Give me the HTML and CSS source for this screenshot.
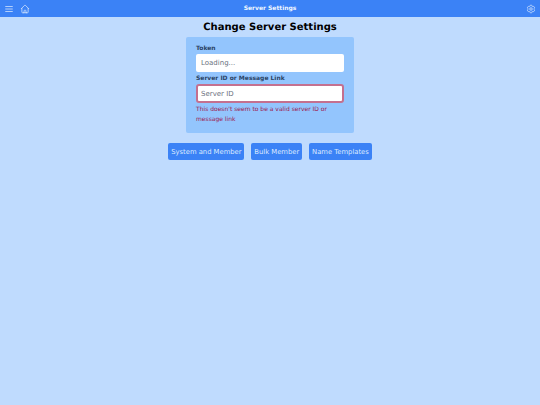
FILE: index.html
```html
<!DOCTYPE html>
<html lang="en">
<head>
    <meta charset="UTF-8">
    <meta name="viewport" content="width=device-width, initial-scale=1.0">
    <title>Server Settings</title>
    <link rel="stylesheet" href="styles.css">
</head>
<body>
    <nav class="navbar">
        <div class="nav-left">
            <svg class="icon" viewBox="0 0 24 24"><path d="M3 6h18M3 12h18M3 18h18"/></svg>
            <svg class="icon" viewBox="0 0 24 24"><path d="m2.25 12 8.954-8.955c.44-.439 1.152-.439 1.591 0L21.75 12M4.5 9.75v10.125c0 .621.504 1.125 1.125 1.125H9.75v-4.875c0-.621.504-1.125 1.125-1.125h2.25c.621 0 1.125.504 1.125 1.125V21h4.125c.621 0 1.125-.504 1.125-1.125V9.75M8.25 21h8.25"/></svg>
        </div>
        <span class="nav-title">Server Settings</span>
        <svg class="icon" viewBox="0 0 24 24"><path d="M9.594 3.94c.09-.542.56-.94 1.11-.94h2.593c.55 0 1.02.398 1.11.94l.213 1.281c.063.374.313.686.645.87.074.04.147.083.22.127.325.196.72.257 1.075.124l1.217-.456a1.125 1.125 0 0 1 1.37.49l1.296 2.247a1.125 1.125 0 0 1-.26 1.431l-1.003.827c-.293.241-.438.613-.43.992a7.723 7.723 0 0 1 0 .255c-.008.378.137.75.43.991l1.004.827c.424.35.534.955.26 1.43l-1.298 2.247a1.125 1.125 0 0 1-1.369.491l-1.217-.456c-.355-.133-.75-.072-1.076.124a6.47 6.47 0 0 1-.22.128c-.331.183-.581.495-.644.869l-.213 1.281c-.09.543-.56.94-1.11.94h-2.594c-.55 0-1.019-.398-1.11-.94l-.213-1.281c-.062-.374-.312-.686-.644-.87a6.52 6.52 0 0 1-.22-.127c-.325-.196-.72-.257-1.076-.124l-1.217.456a1.125 1.125 0 0 1-1.369-.49l-1.297-2.247a1.125 1.125 0 0 1 .26-1.431l1.004-.827c.292-.24.437-.613.43-.991a6.932 6.932 0 0 1 0-.255c.007-.38-.138-.751-.43-.992l-1.004-.827a1.125 1.125 0 0 1-.26-1.43l1.297-2.247a1.125 1.125 0 0 1 1.37-.491l1.216.456c.356.133.751.072 1.076-.124.072-.044.146-.086.22-.128.332-.183.582-.495.644-.869l.214-1.28Z"/><circle cx="12" cy="12" r="3"/></svg>
    </nav>

    <main class="content">
        <h1>Change Server Settings</h1>

        <form class="card">
            <label class="label" for="token">Token</label>
            <input class="input" id="token" type="text" placeholder="Loading...">

            <label class="label second" for="server">Server ID or Message Link</label>
            <input class="input invalid" id="server" type="text" placeholder="Server ID">
            <p class="error">This doesn't seem to be a valid server ID or message link</p>
        </form>

        <div class="buttons">
            <button class="button" type="button">System and Member</button>
            <button class="button" type="button">Bulk Member</button>
            <button class="button" type="button">Name Templates</button>
        </div>
    </main>
</body>
</html>
```

FILE: styles.css
```css
* {
    box-sizing: border-box;
}
body {
    margin: 0;
    min-height: 405px;
    background: #bfdbfe;
    font-family: "DejaVu Sans", sans-serif;
    text-rendering: geometricPrecision;
}
.navbar {
    display: flex;
    align-items: center;
    justify-content: space-between;
    height: 17px;
    padding: 0 4px 0 3.5px;
    background: #3b82f6;
    position: relative;
}
.nav-left {
    display: flex;
    gap: 6px;
}
.nav-title {
    position: absolute;
    left: 0;
    right: 0;
    top: 4.5px;
    text-align: center;
    color: #eff6ff;
    font-size: 6px;
    line-height: 8px;
    font-weight: bold;
}
.icon {
    width: 10px;
    height: 10px;
    fill: none;
    stroke: #dbeafe;
    stroke-width: 1.8;
}
.content {
    display: flex;
    flex-direction: column;
    align-items: center;
}
h1 {
    margin: 4px 0 2px;
    font-size: 10px;
    line-height: 14px;
    color: #000;
}
.card {
    width: 168.6px;
    height: 96px;
    padding: 8px 10.3px 0;
    background: #93c5fd;
    border-radius: 2px;
}
.label {
    display: block;
    margin-bottom: 1px;
    color: #2a4365;
    font-size: 6px;
    line-height: 8px;
    font-weight: bold;
}
.label.second {
    margin-top: 3px;
}
.input {
    display: block;
    width: 100%;
    height: 18px;
    padding: 0 5px;
    border: 0;
    border-radius: 2px;
    background: #fff;
    font-family: inherit;
    font-size: 7px;
}
.input::placeholder {
    color: #6b7280;
}
.input.invalid {
    height: 19px;
    border: 2px solid #c4708f;
    border-radius: 3px;
    padding: 0 3px;
}
.error {
    margin: 1.5px 0 0;
    color: #9d174d;
    font-size: 6px;
    line-height: 10.5px;
}
.buttons {
    display: flex;
    gap: 7px;
    margin-top: 10px;
}
.button {
    height: 17px;
    padding: 1px 2.9px 0;
    border: 0;
    border-radius: 2px;
    background: #3b82f6;
    color: #dbeafe;
    font-family: inherit;
    font-size: 6.8px;
}
```
